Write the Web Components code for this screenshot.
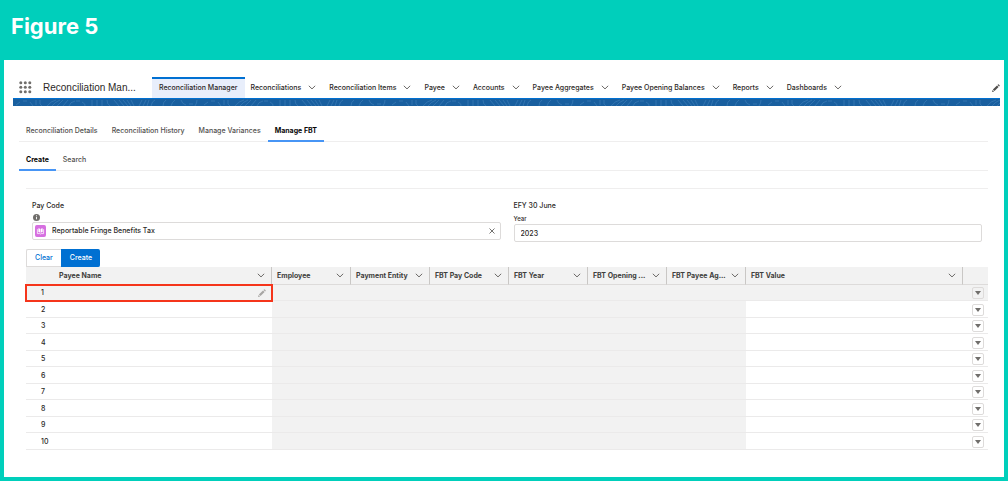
<!DOCTYPE html>
<html lang="en">
<head>
<meta charset="utf-8">
<meta name="viewport" content="width=device-width, initial-scale=1">
<title>Reconciliation Manager</title>
<style>
  html {
    height: 100%;
  }

  body {
    margin: 0;
    min-height: 100%;
    display: flex;
    background-color: #00cfbb;
    color: #2b2826;
    font-family: Inter, "Liberation Sans", sans-serif;
    font-size: 7px;
    font-weight: 500;
    line-height: 10px;
  }
</style>
</head>
<body>
<figure-frame heading="Figure 5">
  <app-nav app="Reconciliation Man...">
    <nav-item selected>Reconciliation Manager</nav-item>
    <nav-item>Reconciliations</nav-item>
    <nav-item>Reconciliation Items</nav-item>
    <nav-item>Payee</nav-item>
    <nav-item>Accounts</nav-item>
    <nav-item>Payee Aggregates</nav-item>
    <nav-item>Payee Opening Balances</nav-item>
    <nav-item>Reports</nav-item>
    <nav-item>Dashboards</nav-item>
  </app-nav>
  <theme-band></theme-band>
  <fbt-page>
    <tab-strip slot="tabs" tabs="Reconciliation Details|Reconciliation History|Manage Variances|Manage FBT" active="3"></tab-strip>
    <tab-strip slot="tabs" tabs="Create|Search" active="0"></tab-strip>
    <lookup-field slot="fields" label="Pay Code" value="Reportable Fringe Benefits Tax"></lookup-field>
    <year-field slot="fields" heading="EFY 30 June" label="Year" value="2023"></year-field>
    <action-bar></action-bar>
    <payee-grid rows="10"></payee-grid>
  </fbt-page>
</figure-frame>

<script>
const CHEVRON = '<svg class="chevron" viewBox="0 0 8 5" width="8" height="5" aria-hidden="true"><path d="M.8 .8 4 3.9 7.2 .8" fill="none" stroke="#6b6967" stroke-width="1"/></svg>';
const PENCIL = '<svg class="pencil" viewBox="0 0 8 8" width="8" height="8" aria-hidden="true"><path d="M5 1.4 6.6 3 2.5 7.1.9 5.5zM5.5.9 6 .4q.4-.4.8 0l.8.8q.4.4 0 .8l-.5.5zM.6 5.9 2.1 7.4 0 8z" fill="currentColor"/></svg>';

class BaseElement extends HTMLElement {
  constructor() {
    super();
    this._shadowRoot = this.attachShadow({ mode: 'open' });
  }

  connectedCallback() {
    this._shadowRoot.innerHTML = this.render();
  }

  attr(name) {
    return this.getAttribute(name) || '';
  }
}

class FigureFrame extends BaseElement {
  render() {
    return `
      <style>
        :host {
          flex: 1;
          min-width: 0;
          display: flex;
          flex-direction: column;
          padding: 0 4px 4px;
        }

        h1 {
          margin: 0;
          padding: 12px 7px 20px;
          color: white;
          font-size: 22px;
          font-weight: 700;
          line-height: 28px;
        }

        main {
          flex: 1;
          padding: 17px 4px 27px 9px;
          background-color: white;
        }
      </style>
      <h1>${this.attr('heading')}</h1>
      <main><slot></slot></main>
    `;
  }
}

class AppNav extends BaseElement {
  render() {
    const steps = [1.8, 6.3, 10.8];
    const dots = steps.map(y => steps.map(x => `<circle cx="${x}" cy="${y}" r="1.5"/>`).join('')).join('');
    return `
      <style>
        :host {
          display: flex;
          height: 21px;
          align-items: center;
          padding-left: 6px;
        }

        button {
          display: flex;
          padding: 0;
          border: 0;
          background: none;
          color: #514f4d;
        }

        .app {
          width: 109px;
          padding-left: 11px;
          font-family: "Liberation Sans", sans-serif;
          font-size: 10px;
          font-weight: 400;
          line-height: 14px;
          white-space: nowrap;
        }

        nav {
          flex: 1;
          align-self: stretch;
          display: flex;
        }
      </style>
      <button aria-label="App launcher">
        <svg viewBox="0 0 13 13" width="13" height="13" fill="#706e6b">${dots}</svg>
      </button>
      <span class="app">${this.attr('app')}</span>
      <nav><slot></slot></nav>
      <button aria-label="Edit">${PENCIL}</button>
    `;
  }
}

class NavItem extends BaseElement {
  render() {
    const selected = this.hasAttribute('selected');
    return `
      <style>
        :host {
          display: flex;
          align-items: center;
          gap: 7px;
          padding: 0 7px 0 6px;
          white-space: nowrap;
        }

        :host([selected]) {
          padding: 0 7px;
          background-color: #e8eefb;
          box-shadow: inset 0 2px #0070d2;
        }

        a {
          color: inherit;
          text-decoration: none;
        }

        button {
          display: flex;
          padding: 0;
          border: 0;
          background: none;
        }
      </style>
      <a href="#"><slot></slot></a>
      ${selected ? '' : `<button aria-label="Open menu">${CHEVRON}</button>`}
    `;
  }
}

class ThemeBand extends BaseElement {
  render() {
    return `
      <style>
        :host {
          display: block;
          height: 7px;
          border-top: 1px solid #0070d2;
          background-color: #195f9f;
        }

        svg {
          display: block;
        }
      </style>
      <svg width="100%" height="7" aria-hidden="true">
        <defs>
          <pattern id="contours" width="188" height="7" patternUnits="userSpaceOnUse">
            <path fill="none" stroke="#4080b8" stroke-width=".6" d="M3 6 7 3M10 2h4M17 3l3 4M23 1v5M27 1v4l2 2M34 7q4-5 9-6M39 7q3-4 8-6M44 7l6-6M50 7l5-6M56 7q1-4 6-5M63 2h4M69 3q4 2 3 4M79 1v6M84 1v6M89 1v6M94 1q0 4 3 6M101 1l5 6M106 1l5 6M110 1l5 6M114 1l4 6M118 1l3 6M126 7l3-6M130 7l3-6M134 7l2-6M138 7q1-5 4-6M150 7q0-4 3-6M158 7q1-4 4-6M168 1q1 4 5 5M176 5h4M182 7q2-3 2-6"/>
          </pattern>
        </defs>
        <rect width="100%" height="7" fill="url(#contours)"/>
      </svg>
    `;
  }
}

class FbtPage extends BaseElement {
  render() {
    return `
      <style>
        :host {
          display: block;
          padding: 15px 12px 0 6px;
        }

        .tabs {
          display: grid;
          gap: 8px;
        }

        .content {
          margin-left: 7px;
        }

        .fields {
          display: grid;
          grid-template-columns: 1fr 1fr;
          gap: 13px;
          margin-top: 17px;
          padding: 12px 6px 7px;
          border-top: 1px solid #efeeee;
        }
      </style>
      <div class="tabs"><slot name="tabs"></slot></div>
      <div class="content">
        <div class="fields"><slot name="fields"></slot></div>
        <slot></slot>
      </div>
    `;
  }
}

class TabStrip extends BaseElement {
  render() {
    const active = Number(this.attr('active'));
    const tabs = this.attr('tabs').split('|').map((tab, i) =>
      `<a href="#" role="tab" aria-selected="${i === active}">${tab}</a>`).join('');
    return `
      <style>
        :host {
          display: block;
        }

        div {
          display: flex;
          height: 20px;
          border-bottom: 1px solid #efeeee;
        }

        a {
          box-sizing: border-box;
          height: 21px;
          padding: 0 7px;
          color: #514f4d;
          line-height: 20px;
          text-decoration: none;
          white-space: nowrap;
        }

        a[aria-selected="true"] {
          border-bottom: 2px solid #4795f5;
          color: #080707;
          font-weight: 700;
        }
      </style>
      <div role="tablist">${tabs}</div>
    `;
  }
}

class LookupField extends BaseElement {
  render() {
    return `
      <style>
        :host {
          display: block;
        }

        label {
          display: block;
        }

        .info {
          display: block;
          margin: 3px 0 1px 1px;
        }

        .box {
          display: flex;
          align-items: center;
          gap: 6px;
          height: 16px;
          padding: 0 5px 0 2px;
          border: 1px solid #dddbda;
          border-radius: 2px;
        }

        input {
          flex: 1;
          min-width: 0;
          padding: 0;
          border: 0;
          outline: 0;
          color: inherit;
          font: inherit;
        }

        button {
          display: flex;
          padding: 0;
          border: 0;
          background: none;
        }
      </style>
      <label for="code">${this.attr('label')}</label>
      <svg class="info" viewBox="0 0 7 7" width="7" height="7" aria-hidden="true">
        <circle cx="3.5" cy="3.5" r="3.5" fill="#706e6b"/>
        <path d="M3.5 1.3v1M3.5 3v2.3" stroke="white" stroke-width=".9"/>
      </svg>
      <div class="box">
        <svg viewBox="0 0 12 12" width="11" height="12" preserveAspectRatio="none" aria-hidden="true">
          <rect width="12" height="12" rx="2" fill="#d66fe0"/>
          <path d="M2.600 4.200v4.400h2.700q.7.800 1.400 0h2.700V4.200" fill="none" stroke="white" stroke-width=".8"/>
          <path d="M3.700 3.200q1.500 0 2 .7v3.800q-.7-.6-2-.6zM8.300 3.200q-1.500 0-2 .7v3.800q.7-.6 2-.6z" fill="white"/>
        </svg>
        <input id="code" value="${this.attr('value')}">
        <button aria-label="Clear selection">
          <svg viewBox="0 0 6 6" width="6" height="6"><path d="M.5 .5 5.5 5.5M5.5 .5 .5 5.5" stroke="#514f4d" stroke-width=".8"/></svg>
        </button>
      </div>
    `;
  }
}

class YearField extends BaseElement {
  render() {
    return `
      <style>
        :host {
          display: block;
        }

        label {
          display: block;
          padding-top: 3px;
          font-size: 6px;
        }

        input {
          display: block;
          box-sizing: border-box;
          width: 100%;
          height: 18px;
          padding: 0 6px;
          border: 1px solid #dddbda;
          border-radius: 2px;
          color: inherit;
          font: inherit;
        }
      </style>
      <div>${this.attr('heading')}</div>
      <label for="year">${this.attr('label')}</label>
      <input id="year" value="${this.attr('value')}">
    `;
  }
}

class ActionBar extends BaseElement {
  render() {
    return `
      <style>
        :host {
          display: flex;
        }

        button {
          height: 18px;
          padding: 0 8px;
          border: 1px solid #dddbda;
          border-right: 0;
          border-radius: 2px 0 0 0;
          background-color: white;
          color: #0070d2;
          font: inherit;
        }

        .brand {
          border-color: #0070d2;
          border-radius: 0 2px 2px 0;
          background-color: #0070d2;
          color: white;
        }
      </style>
      <button>Clear</button>
      <button class="brand">Create</button>
    `;
  }
}

class PayeeGrid extends BaseElement {
  render() {
    const columns = ['Employee', 'Payment Entity', 'FBT Pay Code', 'FBT Year', 'FBT Opening ...', 'FBT Payee Ag...'];
    const head = text => `<th><div>${text}<button aria-label="Column actions">${CHEVRON}</button></div></th>`;
    let rows = '';
    for (let i = 1; i <= Number(this.attr('rows')); i++) {
      rows += `
        <tr>
          <td class="payee"><div>${i}${i === 1 ? `<button aria-label="Edit payee name">${PENCIL}</button>` : ''}</div></td>
          ${'<td class="locked"></td>'.repeat(columns.length)}
          <td></td>
          <td class="menu"><button aria-label="Row actions"><svg viewBox="0 0 6 4" width="6" height="4"><path d="M0 0h6L3 4z" fill="#706e6b"/></svg></button></td>
        </tr>`;
    }
    return `
      <style>
        :host {
          display: block;
        }

        table {
          width: 100%;
          border-collapse: separate;
          border-spacing: 0;
          table-layout: fixed;
        }

        col {
          width: 79px;
        }

        .name {
          width: 246px;
        }

        .value {
          width: auto;
        }

        .actions {
          width: 25px;
        }

        th,
        td {
          box-sizing: border-box;
          padding: 0;
          border-bottom: 1px solid #ebeaea;
          text-align: left;
        }

        th {
          height: 18px;
          border-right: 1px solid #c9c7c5;
          border-bottom-color: #dddbda;
          background-color: #f2f2f2;
          color: #3e3e3c;
          font-weight: 700;
          white-space: nowrap;
        }

        th:last-child {
          border-right: 0;
        }

        th div {
          display: flex;
          align-items: center;
          justify-content: space-between;
          padding: 0 6px 0 5px;
        }

        th:first-child div {
          padding-left: 33px;
        }

        td {
          height: 16px;
          padding-top: 1px;
        }

        tr:nth-child(even) td {
          height: 17px;
        }

        .locked,
        tr:first-child td {
          background-color: #f2f2f2;
        }

        .payee div {
          display: flex;
          align-items: center;
          justify-content: space-between;
          padding: 0 6px 0 15px;
        }

        tr:first-child .payee {
          outline: 2px solid #f5351b;
          outline-offset: -1px;
        }

        button {
          display: flex;
          padding: 0;
          border: 0;
          background: none;
          color: #a8a6a4;
        }

        .menu button {
          box-sizing: border-box;
          width: 12px;
          height: 12px;
          margin: 0 4px 0 auto;
          align-items: center;
          justify-content: center;
          border: 1px solid #dddbda;
          border-radius: 2px;
        }
      </style>
      <table>
        <colgroup><col class="name">${'<col>'.repeat(columns.length)}<col class="value"><col class="actions"></colgroup>
        <thead>
          <tr>${head('Payee Name')}${columns.map(head).join('')}${head('FBT Value')}<th></th></tr>
        </thead>
        <tbody>${rows}</tbody>
      </table>
    `;
  }
}

customElements.define('figure-frame', FigureFrame);
customElements.define('app-nav', AppNav);
customElements.define('nav-item', NavItem);
customElements.define('theme-band', ThemeBand);
customElements.define('fbt-page', FbtPage);
customElements.define('tab-strip', TabStrip);
customElements.define('lookup-field', LookupField);
customElements.define('year-field', YearField);
customElements.define('action-bar', ActionBar);
customElements.define('payee-grid', PayeeGrid);
</script>
</body>
</html>
